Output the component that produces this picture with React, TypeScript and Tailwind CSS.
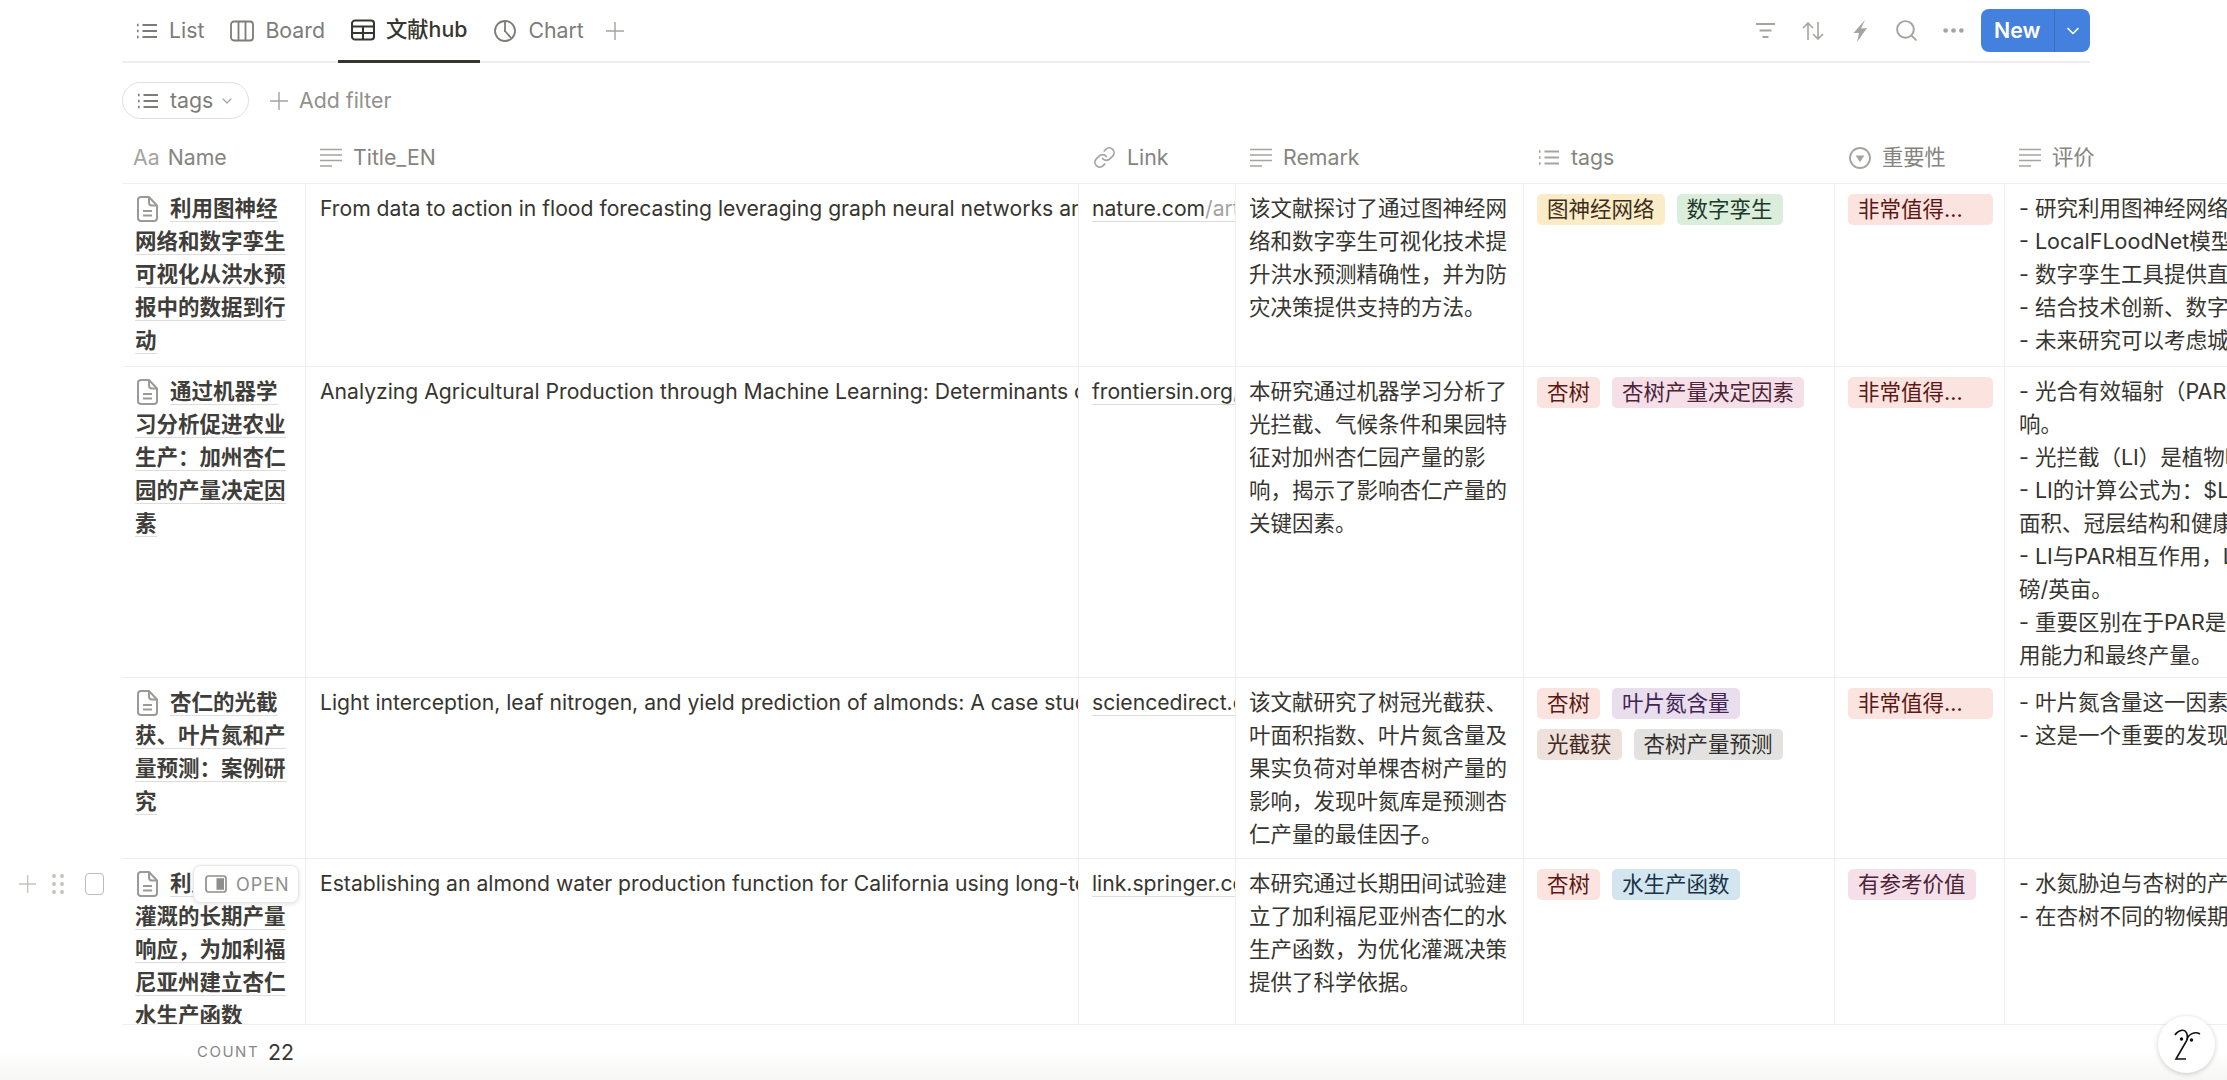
import React from 'react'
import { ChevronDown, Ellipsis, Link as LinkIcon, Search } from 'lucide-react'

type IconProps = { className?: string }

const PlusIcon = ({ className }: IconProps) => (
    <svg viewBox="0 0 20 20" fill="none" stroke="currentColor" strokeWidth="1.6" className={className}>
        <path d="M10 0v20M0 10h20" />
    </svg>
)

const ListIcon = ({ className }: IconProps) => (
    <svg viewBox="0 0 22 18" fill="none" stroke="currentColor" strokeWidth="1.8" className={className}>
        <path d="M6.5 3H21M6.5 9H21M6.5 15H21" />
        <path d="M1 3h1.6M1 9h1.6M1 15h1.6" strokeWidth="2.4" />
    </svg>
)

const BoardIcon = ({ className }: IconProps) => (
    <svg viewBox="0 0 24 22" fill="none" stroke="currentColor" strokeWidth="1.8" className={className}>
        <rect x="1" y="1.5" width="22" height="19" rx="3" />
        <path d="M8.5 1.5v19M15.5 1.5v19" />
    </svg>
)

const TableIcon = ({ className }: IconProps) => (
    <svg viewBox="0 0 24 22" fill="none" stroke="currentColor" strokeWidth="2.1" className={className}>
        <rect x="1" y="1.5" width="22" height="19" rx="3" />
        <path d="M1 7.5h22M1 14h22M12 7.5v13" />
    </svg>
)

const ChartIcon = ({ className }: IconProps) => (
    <svg viewBox="0 0 22 22" fill="none" stroke="currentColor" strokeWidth="1.8" className={className}>
        <circle cx="11" cy="11" r="10" />
        <path d="M11 1v10l6.5 7.5M11 11l-1 0" />
    </svg>
)

const TextIcon = ({ className }: IconProps) => (
    <svg viewBox="0 0 22 19" fill="none" stroke="currentColor" strokeWidth="1.7" className={className}>
        <path d="M0 1.5h22M0 7h22M0 12.5h22M0 18h12" />
    </svg>
)

const SelectIcon = ({ className }: IconProps) => (
    <svg viewBox="0 0 22 22" fill="none" className={className}>
        <circle cx="11" cy="11" r="10" stroke="currentColor" strokeWidth="1.8" />
        <path d="M6.5 8.5h9L11 15z" fill="currentColor" />
    </svg>
)

const FilterIcon = ({ className }: IconProps) => (
    <svg viewBox="0 0 19 15" fill="none" stroke="currentColor" strokeWidth="2" className={className}>
        <path d="M0 1h19M3.5 7.500h12M6.500 14h6" />
    </svg>
)

const SortIcon = ({ className }: IconProps) => (
    <svg viewBox="0 0 22 18" fill="none" stroke="currentColor" strokeWidth="1.6" className={className}>
        <path d="M6 18V1M1 6l5-5 5 5M16 0v17M11 12l5 5 5-5" />
    </svg>
)

const BoltIcon = ({ className }: IconProps) => (
    <svg viewBox="0 0 15 22" fill="currentColor" className={className}>
        <path d="M13 0 1.500 13H7L5 22l10-14-6 .5z" />
    </svg>
)

const DocIcon = ({ className }: IconProps) => (
    <svg viewBox="0 0 21 26" fill="none" stroke="#9b9a97" strokeWidth="2" className={className}>
        <path d="M3.500 1h8.500l8 8.500V22a3 3 0 0 1-3 3H3.500a3 3 0 0 1-2.500-3V4a3 3 0 0 1 2.500-3z" />
        <path d="M12 1v5.500a3 3 0 0 0 3 3h5M6 15h9M6 19.500h9" />
    </svg>
)

const PeekIcon = ({ className }: IconProps) => (
    <svg viewBox="0 0 22 18" fill="none" className={className}>
        <rect x="1" y="1" width="20" height="16" rx="2.500" stroke="#8f8e8b" strokeWidth="1.7" />
        <rect x="11.500" y="3.200" width="7.500" height="11.600" fill="#8f8e8b" />
    </svg>
)

const FaceLogo = ({ className }: IconProps) => (
    <svg viewBox="0 0 57 57" fill="none" stroke="#111" strokeWidth="1.6" className={className}>
        <path d="M17 19c3-5 9-6 11-3 1.500 2 1.500 5 1 8" />
        <path d="M29 24c1-6 8-9 13-6" />
        <path d="M29 24 18 43h10" />
        <circle cx="23.500" cy="23" r="1.700" fill="#111" stroke="none" />
        <circle cx="33.500" cy="24" r="1.700" fill="#111" stroke="none" />
    </svg>
)

const RED = 'bg-[#fbe4df] text-[#5d1715]'
const PURPLE = 'bg-[#e8deee] text-[#412454]'
const BROWN = 'bg-[#eee0da] text-[#442a1e]'
const GRAY = 'bg-[#e3e2e0] text-[#32302c]'
const BLUE = 'bg-[#d3e5ef] text-[#183347]'
const PINK = 'bg-[#f5e0e9] text-[#4c2337]'
const YELLOW = 'bg-[#fbecc8] text-[#402c1b]'
const GREEN = 'bg-[#dbeddb] text-[#1c3829]'

const Tag = ({ label, color, width = '' }: { label: string; color: string; width?: string }) => (
    <span className={`inline-flex h-[31px] items-center rounded-[5px] px-[10px] text-[21.5px] leading-[31px] whitespace-nowrap ${color} ${width}`}>
        {label}
    </span>
)

const rows = [
    {
        height: 'h-[183px]',
        name: '利用图神经网络和数字孪生可视化从洪水预报中的数据到行动',
        title: 'From data to action in flood forecasting leveraging graph neural networks and digital twin visualization',
        domain: 'nature.com',
        path: '/articles/s41467',
        remark: '该文献探讨了通过图神经网络和数字孪生可视化技术提升洪水预测精确性，并为防灾决策提供支持的方法。',
        tags: [
            { label: '图神经网络', color: YELLOW },
            { label: '数字孪生', color: GREEN },
        ],
        rank: { label: '非常值得...', color: RED, width: 'w-[145px]' },
        notes: [
            '- 研究利用图神经网络提高洪水预报',
            '- LocalFLoodNet模型的预测能力',
            '- 数字孪生工具提供直观的可视化',
            '- 结合技术创新、数字孪生与决策',
            '- 未来研究可以考虑城市尺度应用',
        ],
    },
    {
        height: 'h-[311px]',
        name: '通过机器学习分析促进农业生产：加州杏仁园的产量决定因素',
        title: 'Analyzing Agricultural Production through Machine Learning: Determinants of Almond Yield in California',
        domain: 'frontiersin.org',
        path: '/articles/10.3389',
        remark: '本研究通过机器学习分析了光拦截、气候条件和果园特征对加州杏仁园产量的影响，揭示了影响杏仁产量的关键因素。',
        tags: [
            { label: '杏树', color: RED },
            { label: '杏树产量决定因素', color: PINK },
        ],
        rank: { label: '非常值得...', color: RED, width: 'w-[145px]' },
        notes: [
            '- 光合有效辐射（PAR）对产量的影',
            '响。',
            '- 光拦截（LI）是植物吸收光能的',
            '- LI的计算公式为：$LI = 1 - e^',
            '面积、冠层结构和健康状况相关',
            '- LI与PAR相互作用，LI每增加',
            '磅/英亩。',
            '- 重要区别在于PAR是环境因素',
            '用能力和最终产量。',
        ],
    },
    {
        height: 'h-[181px]',
        name: '杏仁的光截获、叶片氮和产量预测：案例研究',
        title: 'Light interception, leaf nitrogen, and yield prediction of almonds: A case study of California orchards',
        domain: 'sciencedirect.com',
        path: '/science/article',
        remark: '该文献研究了树冠光截获、叶面积指数、叶片氮含量及果实负荷对单棵杏树产量的影响，发现叶氮库是预测杏仁产量的最佳因子。',
        tags: [
            { label: '杏树', color: RED },
            { label: '叶片氮含量', color: PURPLE },
            { label: '光截获', color: BROWN },
            { label: '杏树产量预测', color: GRAY },
        ],
        rank: { label: '非常值得...', color: RED, width: 'w-[145px]' },
        notes: ['- 叶片氮含量这一因素对产量的', '- 这是一个重要的发现，说明'],
    },
    {
        height: 'h-[200px]',
        name: '利用亏缺性灌溉的长期产量响应，为加利福尼亚州建立杏仁水生产函数',
        title: 'Establishing an almond water production function for California using long-term yield response',
        domain: 'link.springer.com',
        path: '/article/10.1007',
        remark: '本研究通过长期田间试验建立了加利福尼亚州杏仁的水生产函数，为优化灌溉决策提供了科学依据。',
        tags: [
            { label: '杏树', color: RED },
            { label: '水生产函数', color: BLUE },
        ],
        rank: { label: '有参考价值', color: PINK, width: '' },
        notes: ['- 水氮胁迫与杏树的产量关系', '- 在杏树不同的物候期进行'],
        hovered: true,
    },
]

const HeaderCell = ({ width, icon, label }: { width: string; icon: React.ReactNode; label: string }) => (
    <div className={`flex shrink-0 items-center gap-[11px] pl-[14px] ${width}`}>
        {icon}
        <span>{label}</span>
    </div>
)

const App = () => {
    const iconCls = 'h-[19px] w-[22px] shrink-0 text-[#a5a4a1]'

    return (
        <div className="relative flex h-[1080px] w-[2227px] flex-col overflow-hidden bg-white font-['Inter','Noto_Sans_CJK_SC',sans-serif] text-[#37352f]">
            {/* Views bar */}
            <div className="ml-[122px] flex h-[63px] w-[1968px] shrink-0 items-center justify-between border-b-2 border-[#eeeeec]">
                <div className="flex h-full items-center text-[21.3px] text-[#7d7c78]">
                    <div className="flex h-full items-center gap-[11px] pl-[14px] pr-[13px]">
                        <ListIcon className="h-[18px] w-[22px]" />
                        <span>List</span>
                    </div>
                    <div className="flex h-full items-center gap-[11px] px-[13px]">
                        <BoardIcon className="h-[22px] w-[24px]" />
                        <span>Board</span>
                    </div>
                    <div className="-mb-[2px] flex h-[calc(100%+2px)] items-center gap-[11px] border-b-[3px] border-[#37352f] px-[13px] font-medium text-[#37352f]">
                        <TableIcon className="h-[22px] w-[24px]" />
                        <span>文献hub</span>
                    </div>
                    <div className="flex h-full items-center gap-[12px] px-[14px]">
                        <ChartIcon className="h-[22px] w-[22px]" />
                        <span>Chart</span>
                    </div>
                    <PlusIcon className="ml-[8px] h-[18px] w-[18px] text-[#a5a4a1]" />
                </div>
                <div className="flex h-full items-center text-[#a5a4a1]">
                    <div className="flex w-[47px] justify-center">
                        <FilterIcon className="h-[15px] w-[19px]" />
                    </div>
                    <div className="flex w-[47px] justify-center">
                        <SortIcon className="h-[18px] w-[22px]" />
                    </div>
                    <div className="flex w-[47px] justify-center">
                        <BoltIcon className="h-[22px] w-[15px]" />
                    </div>
                    <div className="flex w-[47px] justify-center">
                        <Search className="h-[25px] w-[25px]" strokeWidth={1.900} />
                    </div>
                    <div className="flex w-[47px] justify-center">
                        <Ellipsis className="h-[27px] w-[27px]" strokeWidth={2.200} />
                    </div>
                    <div className="ml-[4px] flex h-[43px] w-[109px] items-center rounded-[8px] bg-[#4480dd] text-white">
                        <span className="w-[73px] pl-[13px] text-[21.3px] font-semibold">New</span>
                        <div className="flex h-full flex-1 items-center justify-center border-l border-[#3a70c4]">
                            <ChevronDown className="h-[20px] w-[20px]" strokeWidth={2} />
                        </div>
                    </div>
                </div>
            </div>

            {/* Filter bar */}
            <div className="ml-[122px] mt-[19px] flex h-[37px] shrink-0 items-center text-[21.3px] text-[#8a8985]">
                <div className="flex h-full w-[127px] items-center rounded-full border-[1.5px] border-[#e0dfdc] pl-[14px] text-[#7d7c78]">
                    <ListIcon className="h-[18px] w-[22px]" />
                    <span className="ml-[11px]">tags</span>
                    <ChevronDown className="ml-[6px] h-[16px] w-[16px] text-[#a5a4a1]" strokeWidth={1.8} />
                </div>
                <PlusIcon className="ml-[21px] h-[18px] w-[18px] text-[#a5a4a1]" />
                <span className="ml-[11px] text-[#91908c]">Add filter</span>
            </div>

            {/* Column headers */}
            <div className="ml-[122px] flex h-[65px] shrink-0 items-center border-b-[1.5px] border-[#eeeeec] pt-[13px] text-[21.3px] text-[#85847f]">
                <div className="flex w-[184px] shrink-0 items-center gap-[8px] pl-[11px]">
                    <span className="text-[#a5a4a1]">Aa</span>
                    <span>Name</span>
                </div>
                <HeaderCell width="w-[773px]" icon={<TextIcon className={iconCls} />} label="Title_EN" />
                <div className="flex w-[157px] shrink-0 items-center gap-[11px] pl-[14px]">
                    <LinkIcon className="h-[23px] w-[23px] text-[#a5a4a1]" strokeWidth={1.800} />
                    <span>Link</span>
                </div>
                <HeaderCell width="w-[288px]" icon={<TextIcon className={iconCls} />} label="Remark" />
                <HeaderCell width="w-[311px]" icon={<ListIcon className={iconCls} />} label="tags" />
                <HeaderCell width="w-[170px]" icon={<SelectIcon className="h-[22px] w-[22px] shrink-0 text-[#a5a4a1]" />} label="重要性" />
                <HeaderCell width="w-[222px]" icon={<TextIcon className={iconCls} />} label="评价" />
            </div>

            {/* Table rows, the last one is cut off by the footer */}
            <div className="h-[840px] shrink-0 overflow-hidden pl-[122px]">
                {rows.map((row) => (
                    <div key={row.domain} className={`relative flex w-[2105px] border-b-[1.5px] border-[#eeeeec] ${row.height}`}>
                        {row.hovered && (
                            <div className="absolute right-full top-[14px] flex h-[22px] items-center text-[#c4c3c0]">
                                <PlusIcon className="mr-[16px] h-[20px] w-[20px]" />
                                <div className="mr-[22px] grid grid-cols-2 gap-x-[5px] gap-y-[4.500px]">
                                    {[0, 1, 2, 3, 4, 5].map((dot) => (
                                        <span key={dot} className="h-[3.500px] w-[3.500px] rounded-full bg-[#c4c3c0]" />
                                    ))}
                                </div>
                                <div className="mr-[18px] h-[22px] w-[22px] rounded-[4px] border-[1.5px] border-[#bdbcb9]" />
                            </div>
                        )}

                        <div className="w-[184px] shrink-0 border-r-[1.5px] border-[#eeeeec] pl-[13px] pr-[12px] pt-[8px] text-[21.5px] font-semibold leading-[33px] text-[#3f3e3a]">
                            <DocIcon className="ml-[2px] mr-[12px] inline-block h-[26px] w-[21px] align-[-6px]" />
                            <span className="border-b-[1.5px] border-[#dedddb]">{row.name}</span>
                        </div>

                        <div className="w-[773px] shrink-0 overflow-hidden whitespace-nowrap border-r-[1.5px] border-[#eeeeec] pl-[14px] pt-[8px] text-[21.15px] leading-[33px]">
                            {row.title}
                        </div>

                        <div className="w-[157px] shrink-0 overflow-hidden whitespace-nowrap border-r-[1.5px] border-[#eeeeec] pl-[13px] pt-[8px] text-[21.15px] leading-[33px]">
                            <span className="border-b-[1.5px] border-[#dedddb]">
                                {row.domain}
                                <span className="text-[#a5a4a1]">{row.path}</span>
                            </span>
                        </div>

                        <div className="w-[288px] shrink-0 border-r-[1.5px] border-[#eeeeec] pl-[13px] pr-[13px] pt-[8px] text-[21.5px] leading-[33px]">
                            {row.remark}
                        </div>

                        <div className="flex w-[311px] shrink-0 flex-wrap content-start gap-x-[12px] gap-y-[10px] border-r-[1.5px] border-[#eeeeec] pl-[13px] pr-[20px] pt-[10px]">
                            {row.tags.map((tag) => (
                                <Tag key={tag.label} label={tag.label} color={tag.color} />
                            ))}
                        </div>

                        <div className="w-[170px] shrink-0 border-r-[1.5px] border-[#eeeeec] pl-[13px] pt-[10px]">
                            <Tag label={row.rank.label} color={row.rank.color} width={row.rank.width} />
                        </div>

                        <div className="flex-1 overflow-hidden pl-[14px] pt-[8px] text-[21.5px] leading-[33px]">
                            {row.notes.map((note) => (
                                <div key={note} className="whitespace-nowrap">{note}</div>
                            ))}
                        </div>

                        {row.hovered && (
                            <div className="absolute left-[71px] top-[6px] flex h-[38px] w-[106px] items-center rounded-[8px] border border-[#e9e9e7] bg-white pl-[11px] text-[18px] tracking-[1px] text-[#8f8e8b] shadow-[0_1px_4px_rgba(15,15,15,0.12)]">
                                <PeekIcon className="h-[18px] w-[22px]" />
                                <span className="ml-[9px]">OPEN</span>
                            </div>
                        )}
                    </div>
                ))}
            </div>

            {/* Footer */}
            <div className="min-h-0 flex-1 bg-gradient-to-b from-white from-50% to-[#f6f6f5] pl-[122px]">
                <div className="flex h-[56px] items-center border-t-[1.5px] border-[#eeeeec] pl-[75px]">
                    <span className="text-[15px] tracking-[1.5px] text-[#8a8985]">COUNT</span>
                    <span className="ml-[9px] text-[21.3px] text-[#37352f]">22</span>
                </div>
            </div>

            <div className="absolute bottom-[7px] right-[12px] h-[57px] w-[57px] rounded-full bg-white shadow-[0_1px_5px_rgba(15,15,15,0.2)]">
                <FaceLogo className="h-full w-full" />
            </div>
        </div>
    )
}

export default App
